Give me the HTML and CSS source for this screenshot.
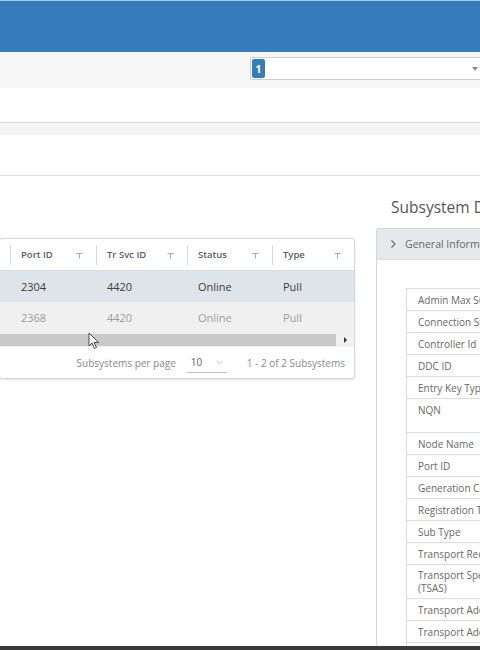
FILE: index.html
```html
<!DOCTYPE html>
<html lang="en">
<head>
  <meta charset="UTF-8">
  <meta name="viewport" content="width=device-width, initial-scale=1.0">
  <title>Subsystems</title>
  <link rel="stylesheet" href="styles.css">
</head>
<body>
  <div class="topbar"></div>
  <div class="subnav">
    <div class="picker">
      <span class="badge">1</span>
      <span class="caret"></span>
    </div>
  </div>
  <div class="blank"></div>
  <div class="tabstrip"></div>
  <div class="toolbar"></div>

  <main class="content">
    <section class="list">
      <div class="grid">
        <div class="grid-head">
          <div class="th"><div class="th-in"></div></div>
          <div class="th"><div class="th-in">Port ID <svg class="filter" viewBox="0 0 7 6"><path d="M0.5 0.5h6M3.5 0.5v5"/></svg></div></div>
          <div class="th"><div class="th-in">Tr Svc ID <svg class="filter" viewBox="0 0 7 6"><path d="M0.5 0.5h6M3.5 0.5v5"/></svg></div></div>
          <div class="th"><div class="th-in">Status <svg class="filter" viewBox="0 0 7 6"><path d="M0.5 0.5h6M3.5 0.5v5"/></svg></div></div>
          <div class="th"><div class="th-in">Type <svg class="filter" viewBox="0 0 7 6"><path d="M0.5 0.5h6M3.5 0.5v5"/></svg></div></div>
        </div>
        <div class="grid-row selected">
          <div class="td"></div>
          <div class="td">2304</div>
          <div class="td">4420</div>
          <div class="td">Online</div>
          <div class="td">Pull</div>
        </div>
        <div class="grid-row muted">
          <div class="td"></div>
          <div class="td">2368</div>
          <div class="td">4420</div>
          <div class="td">Online</div>
          <div class="td">Pull</div>
        </div>
        <div class="hscroll">
          <div class="thumb"></div>
          <div class="scroll-btn"><span class="tri"></span></div>
        </div>
        <div class="grid-foot">
          <span>Subsystems per page</span>
          <span class="per-page">10 <svg class="chev-down" viewBox="0 0 8 5"><path d="M0.5 0.5l3.5 3.5l3.5-3.5"/></svg></span>
          <span>1 - 2 of 2 Subsystems</span>
        </div>
      </div>
    </section>

    <aside class="details">
      <h2>Subsystem Details</h2>
      <div class="stack">
        <div class="stack-head">
          <svg class="chev-right" viewBox="0 0 5 8"><path d="M0.5 0.5l3.5 3.5l-3.5 3.5"/></svg>
          General Information
        </div>
        <div class="stack-body">
          <table class="props">
            <tr><td class="label">Admin Max SQ Size</td><td></td></tr>
            <tr><td class="label">Connection Status</td><td></td></tr>
            <tr><td class="label">Controller Id</td><td></td></tr>
            <tr><td class="label">DDC ID</td><td></td></tr>
            <tr><td class="label">Entry Key Type</td><td></td></tr>
            <tr class="tall"><td class="label">NQN</td><td></td></tr>
            <tr><td class="label">Node Name</td><td></td></tr>
            <tr><td class="label">Port ID</td><td></td></tr>
            <tr><td class="label">Generation Counter</td><td></td></tr>
            <tr><td class="label">Registration Type</td><td></td></tr>
            <tr><td class="label">Sub Type</td><td></td></tr>
            <tr><td class="label">Transport Requirements</td><td></td></tr>
            <tr class="tall two"><td class="label">Transport Specific Address Subtype<br>(TSAS)</td><td></td></tr>
            <tr><td class="label">Transport Address</td><td></td></tr>
            <tr><td class="label">Transport Address Family</td><td></td></tr>
            <tr><td class="label">Transport Type</td><td></td></tr>
          </table>
        </div>
      </div>
    </aside>
  </main>

  <svg class="pointer" viewBox="0 0 12 18">
    <path d="M1 1v13l3-3l2.5 5.5l2-1l-2.5-5h4.5z"/>
  </svg>
  <div class="screen-edge"></div>
</body>
</html>
```

FILE: styles.css
```css
* {
  box-sizing: border-box;
}
html, body {
  margin: 0;
  height: 650px;
  overflow: hidden;
}
body {
  width: 480px;
  font-family: "Open Sans", "Liberation Sans", sans-serif;
  color: #565656;
  background: #fff;
}
.topbar {
  height: 52px;
  background: #357cbb;
  border-top: 1px solid #a9cae6;
}
.subnav {
  height: 36px;
  background: #f6f6f6;
  padding: 5px 0 0 250px;
}
.picker {
  width: 234px;
  height: 23px;
  background: #fff;
  border: 1px solid #cfcfcf;
  border-radius: 2px;
  display: flex;
  align-items: center;
  justify-content: space-between;
  padding: 0 5px 0 1px;
}
.badge {
  width: 13px;
  height: 19px;
  background: #357cbb;
  color: #fff;
  font-size: 11px;
  font-weight: 700;
  display: flex;
  align-items: center;
  justify-content: center;
  border-radius: 2px;
}
.caret {
  border-top: 4px solid #8a8a8a;
  border-left: 3px solid transparent;
  border-right: 3px solid transparent;
}
.blank {
  height: 35px;
  border-bottom: 1px solid #dcdcdc;
}
.tabstrip {
  height: 12px;
  background: #f4f4f4;
}
.toolbar {
  height: 41px;
  border-bottom: 1px solid #dcdcdc;
}

.content {
  display: flex;
  align-items: flex-start;
  width: 900px;
}
.list {
  width: 356px;
  margin-left: -1px;
  padding-top: 62px;
}
.grid {
  border: 1px solid #d7d7d7;
  border-radius: 3px;
  box-shadow: 0 1px 2px rgba(0, 0, 0, 0.12);
  background: #fff;
}
.grid-head,
.grid-row {
  display: grid;
  grid-template-columns: 10px 86px 91px 85px 82px;
}
.grid-head {
  height: 32px;
  border-bottom: 1px solid #dcdcdc;
}
.th {
  display: flex;
  align-items: center;
}
.th:first-child .th-in {
  border-left: none;
}
.th-in {
  flex: 1;
  height: 20px;
  border-left: 1px solid #d9d9d9;
  display: flex;
  align-items: center;
  justify-content: space-between;
  padding: 0 13px 0 10px;
  font-size: 9.5px;
  font-weight: 600;
  color: #5c5c5c;
}
.filter {
  width: 7px;
  height: 6px;
  fill: none;
  stroke: #a8a8a8;
  stroke-width: 1;
  margin-top: 3px;
}
.grid-row {
  height: 31px;
  border-bottom: 1px solid #e2e2e2;
}
.td {
  display: flex;
  align-items: center;
  padding-left: 11px;
  font-size: 11px;
  color: #3e3e3e;
}
.selected {
  background: #dde4ea;
}
.muted {
  background: #f0f0f0;
  border-bottom: none;
}
.muted .td {
  color: #9c9c9c;
}
.hscroll {
  display: flex;
  height: 14px;
  background: #f1f1f1;
}
.thumb {
  flex: 1;
  margin: 1px 0;
  background: #c9c9c9;
}
.scroll-btn {
  width: 18px;
  display: flex;
  align-items: center;
  justify-content: center;
}
.tri {
  border-left: 3px solid #333;
  border-top: 3px solid transparent;
  border-bottom: 3px solid transparent;
}
.grid-foot {
  height: 31px;
  display: flex;
  align-items: center;
  justify-content: flex-end;
  padding-right: 9px;
  font-size: 10px;
  color: #8a8a8a;
}
.per-page {
  width: 40px;
  margin: 0 20px 0 11px;
  padding: 3px 0 3px 4px;
  border-bottom: 1px solid #bdbdbd;
  display: flex;
  align-items: center;
  gap: 14px;
  color: #666;
}
.chev-down {
  width: 7px;
  height: 5px;
  fill: none;
  stroke: #bbb;
  stroke-width: 1;
}

.details {
  width: 360px;
  margin-left: 21px;
  padding-top: 21px;
}
.details h2 {
  margin: 0 0 11px 15px;
  font-size: 15.5px;
  line-height: 20px;
  font-weight: 400;
  color: #565656;
  white-space: nowrap;
}
.stack {
  border-top: 1px solid #d6d6d6;
  border-left: 1px solid #d6d6d6;
  border-top-left-radius: 3px;
}
.stack-head {
  height: 31px;
  background: #e6e9ec;
  border-bottom: 1px solid #dadada;
  display: flex;
  align-items: center;
  gap: 9px;
  padding-left: 14px;
  font-size: 10.5px;
  color: #666;
  white-space: nowrap;
}
.chev-right {
  width: 5px;
  height: 8px;
  fill: none;
  stroke: #666;
  stroke-width: 1.1;
}
.stack-body {
  padding: 28px 0 0 29px;
  height: 400px;
}
.props {
  border-collapse: collapse;
  width: 320px;
}
.props td {
  border: 1px solid #dcdcdc;
  height: 22px;
  padding: 0 11px;
  font-size: 10px;
  color: #686868;
}
.props .label {
  width: 200px;
  font-weight: 500;
  white-space: nowrap;
}
.props .tall td {
  height: 34px;
  vertical-align: top;
  padding-top: 4px;
}
.props .two td {
  line-height: 13px;
  padding-top: 4px;
}

.pointer {
  position: absolute;
  left: 88px;
  top: 332px;
  width: 12px;
  height: 18px;
  fill: #fff;
  stroke: #222;
  stroke-width: 0.8;
}
.screen-edge {
  position: fixed;
  left: 0;
  right: 0;
  bottom: 0;
  height: 4px;
  background: #3a3a3a;
}
```
